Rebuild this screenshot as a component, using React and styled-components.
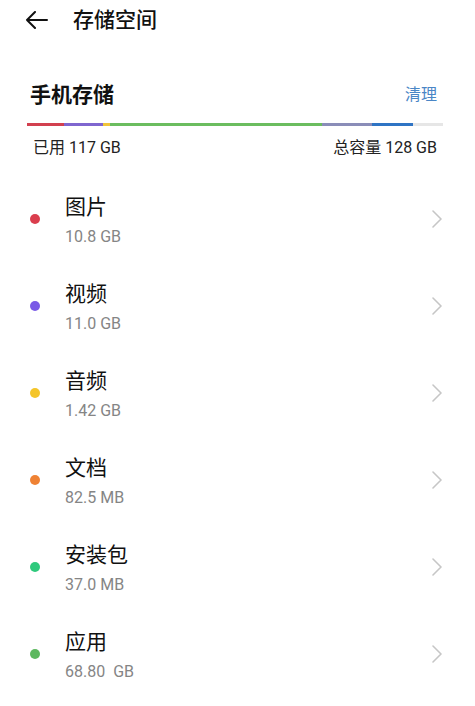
import styled, { createGlobalStyle } from "styled-components";

const Global = createGlobalStyle`
    body {
        margin: 0;
        background: #fff;
        font-family: Roboto, "Noto Sans CJK SC", sans-serif;
        color: #111;
    }
`

const Page = styled.div`
    width: 475px;
    min-height: 706px;
    overflow: hidden;
`

const Header = styled.div`
    height: 40px;
    display: flex;
    align-items: center;
    padding-left: 25px;
    gap: 24px;
`

const Title = styled.div`
    font-size: 21px;
    line-height: 28px;
    font-weight: 500;
`

const Section = styled.div`
    margin-top: 38px;
    height: 30px;
    display: flex;
    align-items: center;
    justify-content: space-between;
    padding: 0 38px 0 30px;
`

const SectionTitle = styled.div`
    font-size: 21px;
    font-weight: 700;
`

const Clean = styled.div`
    font-size: 16px;
    color: #4a86c6;
`

const Bar = styled.div`
    margin: 15px 32px 0 27px;
    height: 3px;
    display: flex;
    background: #e6e6e6;
`

const Segment = styled.div`
    height: 100%;
    width: ${p => p.$w}px;
    background: ${p => p.$color};
`

const Stats = styled.div`
    margin-top: 12px;
    display: flex;
    justify-content: space-between;
    padding: 0 38px 0 33px;
    font-size: 16px;
    line-height: 20px;
    color: #222;
`

const List = styled.div`
    margin-top: 19px;
`

const Item = styled.div`
    height: 87px;
    display: flex;
    align-items: center;
    padding: 0 32px 0 30px;
`

const Dot = styled.div`
    width: 10px;
    height: 10px;
    border-radius: 50%;
    background: ${p => p.$color};
    margin-right: 25px;
    flex-shrink: 0;
    margin-bottom: 3px;
`

const Texts = styled.div`
    flex: 1;
    display: flex;
    flex-direction: column;
`

const Name = styled.div`
    font-size: 21px;
    line-height: 28px;
    color: #111;
`

const Size = styled.div`
    margin-top: 5px;
    font-size: 16px;
    line-height: 22px;
    color: #858585;
    white-space: pre;
`

const Chevron = styled.svg`
    width: 12px;
    height: 18px;
    margin-bottom: 3px;
`

const segments = [
    { w: 37, color: "#d2404f" },
    { w: 39, color: "#7f66cf" },
    { w: 7, color: "#f0c43a" },
    { w: 212, color: "#6bbd5f" },
    { w: 50, color: "#8a8db8" },
    { w: 41, color: "#2f74c4" },
];

const items = [
    { name: "图片", size: "10.8 GB", color: "#da3e4d" },
    { name: "视频", size: "11.0 GB", color: "#7a5ae6" },
    { name: "音频", size: "1.42 GB", color: "#f4c52a" },
    { name: "文档", size: "82.5 MB", color: "#ef8234" },
    { name: "安装包", size: "37.0 MB", color: "#2ec97c" },
    { name: "应用", size: "68.80  GB", color: "#5db85f" },
];

export default () => {
    return (
        <Page>
            <Global/>
            <Header>
                <svg width="24" height="18" viewBox="0 0 24 18" fill="none" stroke="#111" strokeWidth="2" strokeLinecap="round" strokeLinejoin="round">
                    <path d="M22 9H2M10 1L2 9l8 8"/>
                </svg>
                <Title>存储空间</Title>
            </Header>
            <Section>
                <SectionTitle>手机存储</SectionTitle>
                <Clean>清理</Clean>
            </Section>
            <Bar>
                {segments.map((s, i) => <Segment key={i} $w={s.w} $color={s.color}/>)}
            </Bar>
            <Stats>
                <span>已用 117 GB</span>
                <span>总容量 128 GB</span>
            </Stats>
            <List>
                {items.map(item => (
                    <Item key={item.name}>
                        <Dot $color={item.color}/>
                        <Texts>
                            <Name>{item.name}</Name>
                            <Size>{item.size}</Size>
                        </Texts>
                        <Chevron viewBox="0 0 12 18" fill="none" stroke="#c6c6c6" strokeWidth="1.6" strokeLinecap="round" strokeLinejoin="round">
                            <path d="M2 1l8 8-8 8"/>
                        </Chevron>
                    </Item>
                ))}
            </List>
        </Page>
    );
}
